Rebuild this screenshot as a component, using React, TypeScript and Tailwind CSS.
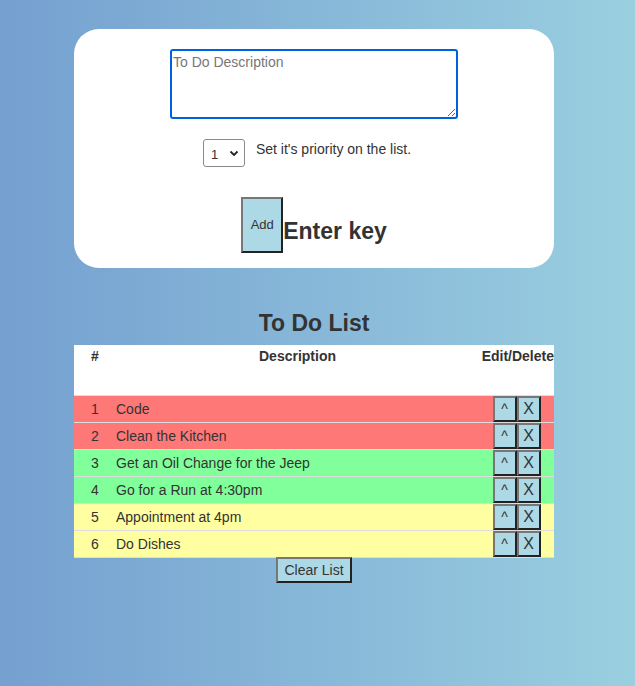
import React, { useState } from 'react';

type Todo = { id: number; text: string; color: string };

const todos: Todo[] = [
  { id: 1, text: 'Code', color: 'bg-[#ff7878]' },
  { id: 2, text: 'Clean the Kitchen', color: 'bg-[#ff7878]' },
  { id: 3, text: 'Get an Oil Change for the Jeep', color: 'bg-[#80ff9a]' },
  { id: 4, text: 'Go for a Run at 4:30pm', color: 'bg-[#80ff9a]' },
  { id: 5, text: 'Appointment at 4pm', color: 'bg-[#ffffa2]' },
  { id: 6, text: 'Do Dishes', color: 'bg-[#ffffa2]' },
];

const btn =
  'bg-[#add8e6] border-2 border-t-[#777] border-l-[#777] border-b-[#222] border-r-[#222] text-[#333]';

const App: React.FC = () => {
  const [desc, setDesc] = useState('');

  return (
    <div className="min-h-[686px] w-full bg-gradient-to-r from-[#75a0d0] to-[#9acfe0] pt-[29px] font-['Liberation_Sans',Arial,sans-serif] text-[#333]">
      <div className="w-[628px]">
        <div className="mx-auto flex h-[239px] w-[480px] flex-col items-center rounded-[25px] bg-white pt-[20px]">
          <textarea
            value={desc}
            onChange={event => setDesc(event.target.value)}
            placeholder="To Do Description"
            className="h-[70px] w-[288px] rounded-[3px] border-2 border-[#0061e0] px-[1px] pt-[3px] text-[14px] leading-[16px] outline-none placeholder:text-[#777]"
          />
          <div className="mt-[20px] flex items-start pr-[14px]">
            <div className="relative h-[28px] w-[42px] rounded-[3px] border border-[#8a8a8a]">
              <span className="absolute left-[7px] top-[7px] text-[13px] leading-[16px]">1</span>
              <svg className="absolute right-[5px] top-[10px]" width="10" height="7" viewBox="0 0 10 7">
                <path d="M1.5 1.5 L5 5 L8.5 1.5" fill="none" stroke="#222" strokeWidth="1.8" />
              </svg>
            </div>
            <span className="ml-[11px] mt-[1px] text-[14px] leading-[18px]">Set it's priority on the list.</span>
          </div>
          <div className="mt-[30px] flex items-start">
            <button className={`${btn} h-[56px] w-[42px] text-[13px]`}>Add</button>
            <span className="mt-[20px] text-[23px] font-bold leading-[28px]">Enter key</span>
          </div>
        </div>

        <h2 className="mt-[41px] text-center text-[23px] font-bold leading-[28px]">To Do List</h2>

        <div className="mx-auto mt-[8px] w-[480px]">
          <div className="flex h-[51px] border-b border-[#ddd] bg-white pt-[3px] text-[14px] font-bold leading-[16px]">
            <div className="w-[42px] text-center">#</div>
            <div className="flex-1 text-center">Description</div>
            <div className="w-[75px] whitespace-nowrap text-right">Edit/Delete</div>
          </div>
          {todos.map(todo => (
            <div key={todo.id} className={`flex h-[27px] items-center border-b border-[#ddd] text-[14px] ${todo.color}`}>
              <div className="w-[42px] text-center">{todo.id}</div>
              <div className="flex-1">{todo.text}</div>
              <div className="flex w-[75px] justify-center">
                <button className={`${btn} h-[26px] w-[24px] text-[14px] leading-none`}>^</button>
                <button className={`${btn} h-[26px] w-[24px] text-[16px] leading-none`}>X</button>
              </div>
            </div>
          ))}
          <div className="flex justify-center">
            <button className={`${btn} -mt-px h-[26px] w-[76px] text-[14px]`}>Clear List</button>
          </div>
        </div>
      </div>
    </div>
  );
};

export default App;
